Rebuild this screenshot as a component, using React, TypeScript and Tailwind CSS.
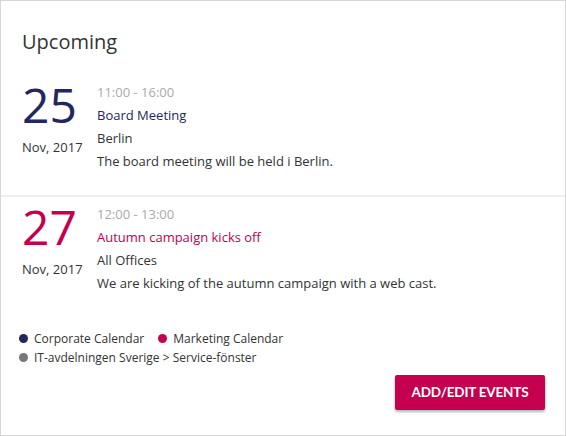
import React from "react";

// Upcoming events card: date column + details, legend and action button.

type Ev = {
  day: string;
  month: string;
  time: string;
  title: string;
  place: string;
  text: string;
  tone: "navy" | "pink";
};

const EVENTS: Ev[] = [
  {
    day: "25",
    month: "Nov, 2017",
    time: "11:00 - 16:00",
    title: "Board Meeting",
    place: "Berlin",
    text: "The board meeting will be held i Berlin.",
    tone: "navy",
  },
  {
    day: "27",
    month: "Nov, 2017",
    time: "12:00 - 13:00",
    title: "Autumn campaign kicks off",
    place: "All Offices",
    text: "We are kicking of the autumn campaign with a web cast.",
    tone: "pink",
  },
];

function EventRow({ ev, first }: { ev: Ev; first: boolean }) {
  const color = ev.tone === "navy" ? "text-[#23265f]" : "text-[#c4004f]";
  return (
    <div
      className={
        first
          ? "flex px-[21px] pb-[22px] border-b-2 border-[#eeeeee]"
          : "flex px-[21px] pt-[6px]"
      }
    >
      <div className="w-[75px] shrink-0">
        <div className={`text-[48px] leading-[48px] ${color}`}>{ev.day}</div>
        <div className="mt-[7px] text-[13px] leading-[23px] text-[#333]">
          {ev.month}
        </div>
      </div>
      <div className="text-[13px] leading-[23px] text-[#333]">
        <div className="text-[#aaaaaa]">{ev.time}</div>
        <div className={color}>{ev.title}</div>
        <div>{ev.place}</div>
        <div>{ev.text}</div>
      </div>
    </div>
  );
}

function Legend({ dot, label }: { dot: string; label: string }) {
  return (
    <span className="flex items-center gap-[6px]">
      <span className={`size-[9px] rounded-full ${dot}`} />
      {label}
    </span>
  );
}

export default function App() {
  return (
    <div
      className="w-[566px] h-[436px] bg-white border border-[#d6d6d6] flex flex-col"
      style={{ fontFamily: '"Open Sans", "Noto Sans", sans-serif' }}
    >
      <h2 className="pt-[27px] px-[21px] text-[20px] leading-[28px] text-[#333]">
        Upcoming
      </h2>
      <div className="mt-[25px]">
        {EVENTS.map((ev, i) => (
          <EventRow key={ev.day} ev={ev} first={i === 0} />
        ))}
      </div>
      <div className="mt-[34px] px-[18px] text-[12px] leading-[19px] text-[#333]">
        <div className="flex gap-[14px]">
          <Legend dot="bg-[#23265f]" label="Corporate Calendar" />
          <Legend dot="bg-[#c4004f]" label="Marketing Calendar" />
        </div>
        <Legend dot="bg-[#777777]" label="IT-avdelningen Sverige > Service-fönster" />
      </div>
      <div className="flex justify-end px-[20px] mt-[8px]">
        <button
          className="w-[150px] h-[35px] rounded-[2px] bg-[#c4004f] text-white text-[13.5px] tracking-[-0.2px] font-bold shadow-[0_2px_3px_rgba(0,0,0,0.3)]"
          style={{ fontFamily: "Lato, sans-serif" }}
        >
          ADD/EDIT EVENTS
        </button>
      </div>
    </div>
  );
}
